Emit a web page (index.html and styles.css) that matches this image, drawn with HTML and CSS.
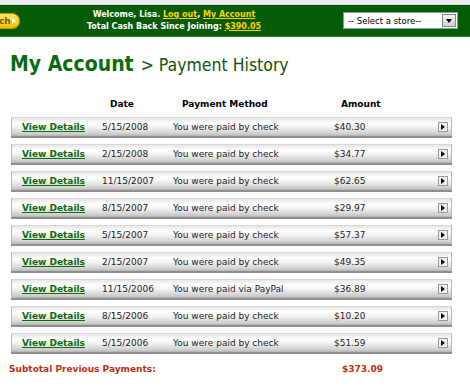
FILE: index.html
```html
<!DOCTYPE html>
<html lang="en">
<head>
    <meta charset="UTF-8">
    <title>My Account - Payment History</title>
    <link rel="stylesheet" href="styles.css">
</head>
<body>
    <div class="topline"></div>
    <div class="topbar">
        <a class="search-btn" href="#">ch<span class="search-arrow"></span></a>
        <div class="welcome">
            <div>Welcome, Lisa. <a href="#">Log out</a>, <a href="#">My Account</a></div>
            <div>Total Cash Back Since Joining: <a href="#">$390.05</a></div>
        </div>
        <div class="store-select">
            <span class="store-text">-- Select a store--</span>
            <span class="store-drop"><span class="down"></span></span>
        </div>
    </div>

    <h1 class="title"><b>My Account</b> <span class="crumb">&gt; Payment History</span></h1>

    <div class="history">
        <div class="head">
            <span class="c-link"></span>
            <span class="c-date">Date</span>
            <span class="c-method">Payment Method</span>
            <span class="c-amount">Amount</span>
        </div>

        <div class="row"><a class="c-link" href="#">View Details</a><span class="c-date">5/15/2008</span><span class="c-method">You were paid by check</span><span class="c-amount">$40.30</span><span class="play"></span></div>
        <div class="row"><a class="c-link" href="#">View Details</a><span class="c-date">2/15/2008</span><span class="c-method">You were paid by check</span><span class="c-amount">$34.77</span><span class="play"></span></div>
        <div class="row"><a class="c-link" href="#">View Details</a><span class="c-date">11/15/2007</span><span class="c-method">You were paid by check</span><span class="c-amount">$62.65</span><span class="play"></span></div>
        <div class="row"><a class="c-link" href="#">View Details</a><span class="c-date">8/15/2007</span><span class="c-method">You were paid by check</span><span class="c-amount">$29.97</span><span class="play"></span></div>
        <div class="row"><a class="c-link" href="#">View Details</a><span class="c-date">5/15/2007</span><span class="c-method">You were paid by check</span><span class="c-amount">$57.37</span><span class="play"></span></div>
        <div class="row"><a class="c-link" href="#">View Details</a><span class="c-date">2/15/2007</span><span class="c-method">You were paid by check</span><span class="c-amount">$49.35</span><span class="play"></span></div>
        <div class="row"><a class="c-link" href="#">View Details</a><span class="c-date">11/15/2006</span><span class="c-method">You were paid via PayPal</span><span class="c-amount">$36.89</span><span class="play"></span></div>
        <div class="row"><a class="c-link" href="#">View Details</a><span class="c-date">8/15/2006</span><span class="c-method">You were paid by check</span><span class="c-amount">$10.20</span><span class="play"></span></div>
        <div class="row"><a class="c-link" href="#">View Details</a><span class="c-date">5/15/2006</span><span class="c-method">You were paid by check</span><span class="c-amount">$51.59</span><span class="play"></span></div>

        <div class="subtotal">
            <span class="sub-label">Subtotal Previous Payments:</span>
            <span class="sub-amount">$373.09</span>
        </div>
    </div>
</body>
</html>
```

FILE: styles.css
```css
body {
    margin: 0;
    background: #fff;
    font-family: "DejaVu Sans", Verdana, sans-serif;
    font-size: 9px;
    color: #000;
    width: 470px;
    overflow: hidden;
}

/* top green bar */
.topline {
    height: 4px;
    background: #ececec;
    border-bottom: 1px solid #d4d4d4;
}
.topbar {
    height: 31px;
    background: #065c06;
    border-bottom: 1px solid #3b7a3b;
    display: flex;
    align-items: center;
}
.search-btn {
    display: flex;
    align-items: center;
    height: 14px;
    width: 20px;
    margin-left: -2px;
    padding-left: 1px;
    background: linear-gradient(#ffe46a, #f0c000);
    border: 1px solid #c89a00;
    border-left: none;
    border-radius: 0 8px 8px 0;
    color: #7a5a00;
    font-weight: bold;
    font-size: 9px;
    text-decoration: none;
}
.search-arrow {
    width: 0;
    height: 0;
    margin-left: 1px;
    border-left: 4px solid #fff;
    border-top: 3px solid transparent;
    border-bottom: 3px solid transparent;
}
.welcome {
    margin-left: 56px;
    color: #fff;
    font-weight: bold;
    font-size: 8px;
    line-height: 12px;
    text-align: center;
    width: 196px;
}
.welcome a {
    color: #ffd200;
}
.store-select {
    margin-left: auto;
    margin-right: 12px;
    width: 113px;
    height: 15px;
    background: #fff;
    border: 1px solid #7f9db9;
    display: flex;
    align-items: center;
    justify-content: space-between;
}
.store-text {
    padding-left: 4px;
    font-size: 8.5px;
}
.store-drop {
    width: 12px;
    height: 11px;
    margin-right: 1px;
    background: linear-gradient(#f4f4f4, #cfcfcf);
    border: 1px solid #888;
    display: flex;
    align-items: center;
    justify-content: center;
}
.down {
    border-top: 4px solid #000;
    border-left: 3px solid transparent;
    border-right: 3px solid transparent;
}

/* heading */
.title {
    margin: 14px 0 0 10px;
    font-family: "DejaVu Sans Condensed", "Liberation Sans", sans-serif;
    font-weight: normal;
    color: #0b560b;
    font-size: 17.5px;
    line-height: 27px;
}
.title b {
    font-size: 21px;
    font-weight: bold;
    color: #0b6a0b;
    margin-right: 2px;
}

/* history table */
.history {
    margin: 18px 0 0 11px;
    width: 441px;
}
.head,
.row {
    display: flex;
    align-items: center;
}
.head {
    font-weight: bold;
    height: 14px;
}
.head .c-date { padding-left: 9px; }
.head .c-method { padding-left: 10px; }
.head .c-amount { padding-left: 8px; }

.c-link,
.c-date,
.c-method,
.c-amount {
    flex: none;
    box-sizing: border-box;
}
.c-link { width: 90px; padding-left: 10px; }
.c-date { width: 71px; }
.c-method { width: 161px; }
.c-amount { width: 104px; }

.row {
    height: 19px;
    margin-top: 8px;
    box-sizing: border-box;
    background: linear-gradient(#e6e6e6, #ffffff 30%, #f2f2f2 55%, #d6d6d6 85%, #c4c4c4);
    border: 1px solid #b8b8b8;
    border-top-color: #d8d8d8;
    box-shadow: 0 2px 0 #8e8e8e;
    color: #222;
}
.head + .row {
    margin-top: 6px;
}
.row .c-link {
    color: #0b6a0b;
    font-weight: bold;
}
.play {
    width: 10px;
    height: 10px;
    box-sizing: border-box;
    border: 1px solid #9a9a9a;
    background: #f0f0f0;
    display: flex;
    align-items: center;
    justify-content: center;
}
.play::after {
    content: "";
    border-left: 4px solid #000;
    border-top: 3px solid transparent;
    border-bottom: 3px solid transparent;
}

.subtotal {
    display: flex;
    margin: 12px 0 0 -2px;
    color: #c0300f;
    font-weight: bold;
}
.sub-label { width: 333px; }
```
